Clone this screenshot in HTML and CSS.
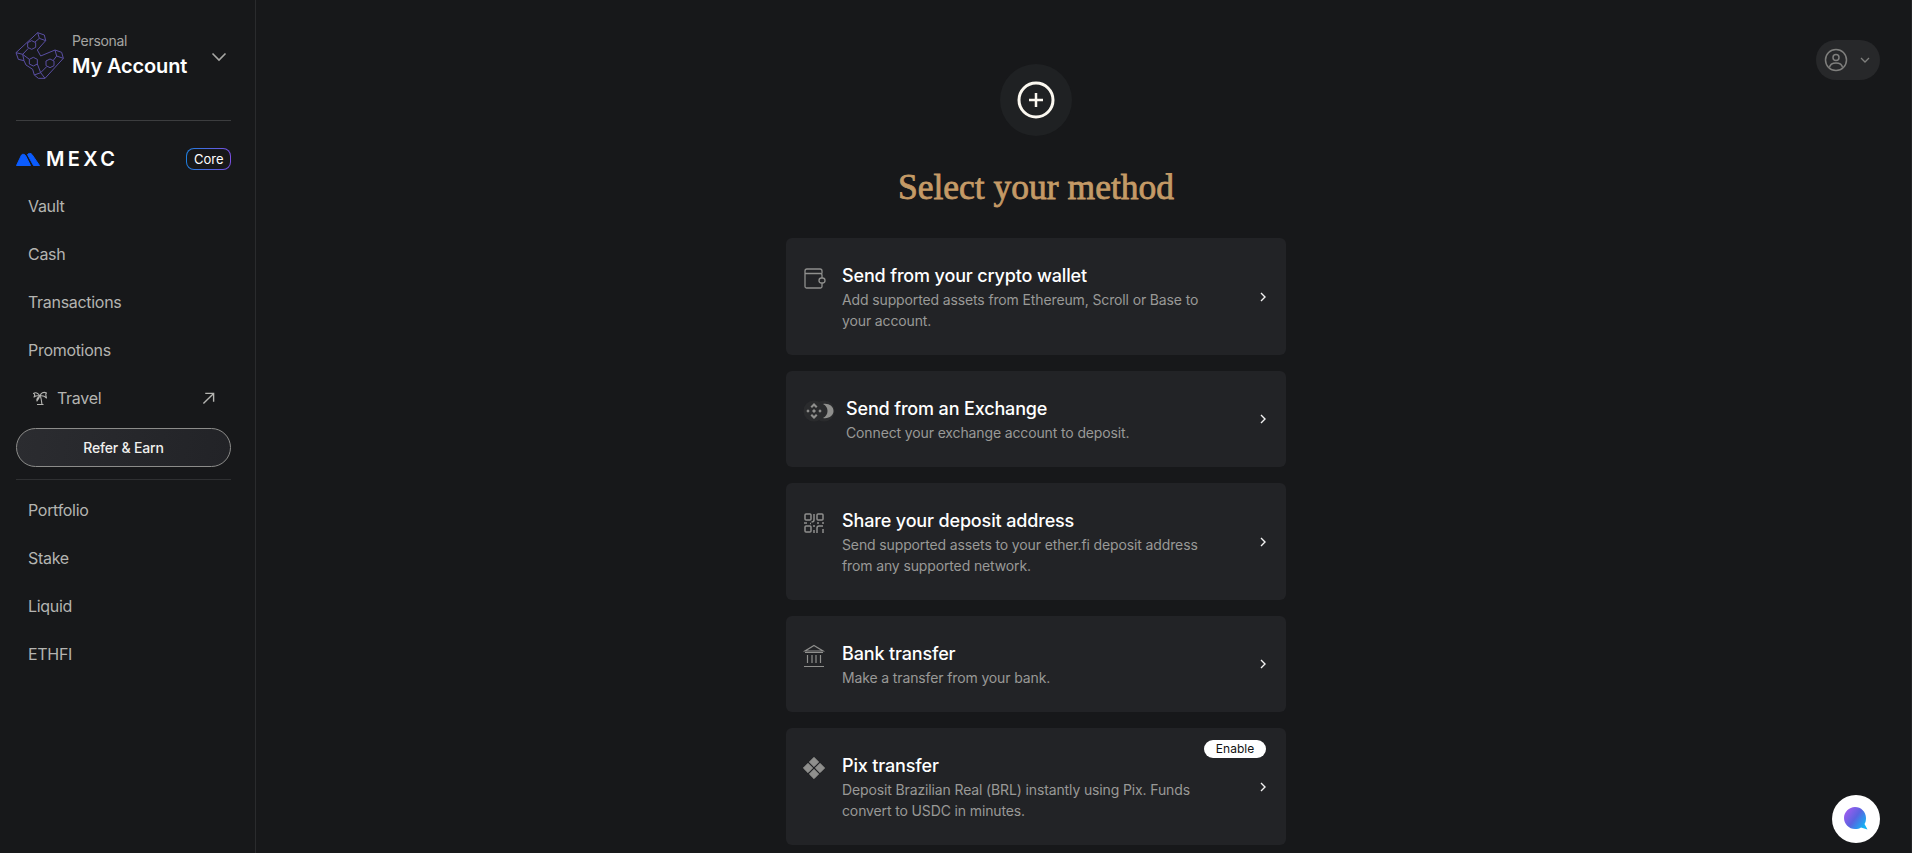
FILE: index.html
```html
<!DOCTYPE html>
<html lang="en">
<head>
    <meta charset="UTF-8">
    <meta name="viewport" content="width=device-width, initial-scale=1.0">
    <title>Select your method</title>
    <link rel="stylesheet" href="styles.css">
</head>
<body>
    <svg class="defs" width="0" height="0" aria-hidden="true">
        <defs>
            <linearGradient id="chatFill" x1="0" y1="0" x2="1" y2="0.7">
                <stop offset="0.1" stop-color="#a35cf0"/>
                <stop offset="0.55" stop-color="#5a63e0"/>
                <stop offset="1" stop-color="#12b5f5"/>
            </linearGradient>
        </defs>
    </svg>

    <aside class="sidebar">
        <div class="account">
            <svg class="account-logo" viewBox="45 33 150 150" fill="none" stroke="#5a4fa3" stroke-width="3" stroke-linejoin="round">
                <path d="M113 38L133 45L137 62L112 90L122 108L165 90L185 97L190 115L135 175L115 175L103 165L98 148L78 135L72 122L55 118L48 98Z"/>
                <path d="M95 62L107 68V82L95 88L83 82V68Z"/>
                <path d="M100 112L112 118V132L100 138L88 132V118Z"/>
                <path d="M150 117L162 123V137L150 143L138 137V123Z"/>
                <path d="M113 38L118 55L137 62M118 55L105 66M85 85L68 103L48 98M68 103L72 122M68 103L88 118"/>
                <path d="M165 90L170 108L190 115M170 108L160 121M140 140L122 158L103 165M122 158L135 175M112 132L122 158"/>
            </svg>
            <div class="account-text">
                <span class="account-label">Personal</span>
                <span class="account-name">My Account</span>
            </div>
            <svg class="account-chevron" viewBox="0 0 16 10" fill="none" stroke="#a8a8a5" stroke-width="1.6"><path d="M1.5 1.5L8 8L14.5 1.5"/></svg>
        </div>

        <div class="brand">
            <div class="brand-logo">
                <svg width="24" height="14" viewBox="0 0 24 14" fill="#0b5cff" stroke="#0b5cff" stroke-linejoin="round"><path d="M.5 13.500L5.500 3C6 2 8.500 2 9.500 3.500L14.500 13.500Z"/><path d="M11.500 2.500C12.500 1 15 1 16 2.500L23.500 13.500H17.500Z"/></svg>
                <span class="brand-name">MEXC</span>
            </div>
            <span class="core-badge">Core</span>
        </div>

        <nav class="nav">
            <a class="nav-item">Vault</a>
            <a class="nav-item">Cash</a>
            <a class="nav-item">Transactions</a>
            <a class="nav-item">Promotions</a>
            <a class="nav-item nav-travel">
                <svg width="16" height="16" viewBox="0 0 16 16" fill="none" stroke="#b4b4b1" stroke-width="1.1" stroke-linejoin="round"><path d="M8 6C6 3 3.500 2 1.500 3.500C3 4 3 5.500 2 7C4 5.500 6 5.500 8 6ZM8 6C9 3 11.500 1.500 14.500 3C13 3.500 14 6 14.500 8C12.500 6 10 5.500 8 6ZM7.500 6.500C5.500 7.500 4.500 9 5 11C6 9.500 7 8 7.500 6.500ZM8.500 6.500C9.500 9 9.500 12 10 14.500H7.500M5 14.500H11.500"/></svg>
                <span class="nav-travel-label">Travel</span>
                <svg width="13" height="13" viewBox="0 0 14 14" fill="none" stroke="#b4b4b1" stroke-width="1.5"><path d="M1.500 12.500L12.500 1.500M3.500 1.500H12.500V10.500"/></svg>
            </a>
        </nav>
        <button class="refer-btn">Refer &amp; Earn</button>
        <nav class="nav nav-lower">
            <a class="nav-item">Portfolio</a>
            <a class="nav-item">Stake</a>
            <a class="nav-item">Liquid</a>
            <a class="nav-item">ETHFI</a>
        </nav>
    </aside>

    <main class="main">
        <div class="plus-circle">
            <svg width="38" height="38" viewBox="0 0 38 38" fill="none" stroke="#fbf8f0" stroke-width="3"><circle cx="19" cy="19" r="17"/><path d="M19 12V26M12 19H26" stroke-width="2.500"/></svg>
        </div>
        <h1 class="title">Select your method</h1>

        <div class="methods">
            <div class="method">
                <svg class="method-icon" viewBox="0 0 24 24" fill="none" stroke="#8f8f8d" stroke-width="1.300"><path d="M3 7.500V5C3 3.900 3.900 3 5 3H18C19.100 3 20 3.900 20 5V7.500M3 6.500V20.500C3 21.300 3.700 22 4.500 22H18.500C19.300 22 20 21.300 20 20.500V17M3 7.500H18.500C19.300 7.500 20 8.200 20 9V12"/><rect x="17" y="12" width="6" height="5" rx="2.500"/></svg>
                <div class="method-text">
                    <div class="method-title">Send from your crypto wallet</div>
                    <div class="method-desc">Add supported assets from Ethereum, Scroll or Base to your account.</div>
                </div>
                <svg class="method-chevron" viewBox="0 0 6 10" fill="none" stroke="#f2f2f2" stroke-width="1.400"><path d="M1 1L5 5L1 9"/></svg>
            </div>

            <div class="method method-wide">
                <svg class="method-icon" viewBox="0 0 34 24" fill="none">
                    <circle cx="22" cy="12" r="10.500" fill="#2a2b2d"/>
                    <circle cx="12" cy="12" r="10.500" fill="#2a2b2d"/>
                    <path fill="#8f8f8d" d="M12 4L15.500 7.500L14 9L12 7L10 9L8.500 7.500ZM6 10.300L7.700 12L6 13.700L4.300 12ZM18 10.300L19.700 12L18 13.700L16.300 12ZM12 10L14 12L12 14L10 12ZM8.500 16.500L10 15L12 17L14 15L15.500 16.500L12 20Z"/>
                    <path fill="#8f8f8d" d="M21 5C27 4 31.500 7.500 31.500 12C31.500 16.500 27 20 21 19C24 17.500 25.500 15 25.500 12C25.500 9 24 6.500 21 5Z"/>
                </svg>
                <div class="method-text">
                    <div class="method-title">Send from an Exchange</div>
                    <div class="method-desc">Connect your exchange account to deposit.</div>
                </div>
                <svg class="method-chevron" viewBox="0 0 6 10" fill="none" stroke="#f2f2f2" stroke-width="1.400"><path d="M1 1L5 5L1 9"/></svg>
            </div>

            <div class="method">
                <svg class="method-icon" viewBox="0 0 24 24" fill="none" stroke="#8f8f8d" stroke-width="1.500"><rect x="3" y="3" width="6" height="6" rx="1"/><rect x="15" y="3" width="6" height="6" rx="1"/><rect x="3" y="15" width="6" height="6" rx="1"/><path d="M12 3V9C12 10.500 11 11 9.500 11M2 12H5M8 12.500H9M15 12H17M20 12H22M12 14V16M12 19V22M15 22V17C15 15.500 16 15 17 15H21M21 18V22"/></svg>
                <div class="method-text">
                    <div class="method-title">Share your deposit address</div>
                    <div class="method-desc">Send supported assets to your ether.fi deposit address from any supported network.</div>
                </div>
                <svg class="method-chevron" viewBox="0 0 6 10" fill="none" stroke="#f2f2f2" stroke-width="1.400"><path d="M1 1L5 5L1 9"/></svg>
            </div>

            <div class="method">
                <svg class="method-icon" viewBox="0 0 24 24" fill="none" stroke="#8f8f8d" stroke-width="1.200"><path d="M12 1.500L21 7H3ZM3 8.500H21M5.500 11V19M10 11V19M14 11V19M18.500 11V19M2 22.500H22" /></svg>
                <div class="method-text">
                    <div class="method-title">Bank transfer</div>
                    <div class="method-desc">Make a transfer from your bank.</div>
                </div>
                <svg class="method-chevron" viewBox="0 0 6 10" fill="none" stroke="#f2f2f2" stroke-width="1.400"><path d="M1 1L5 5L1 9"/></svg>
            </div>

            <div class="method">
                <svg class="method-icon" viewBox="0 0 24 24" fill="#8f8f8d" stroke="#8f8f8d" stroke-width="0.800" stroke-linejoin="round"><path d="M12 1.300L16.700 6L12 10.700L7.300 6ZM18 7.300L22.700 12L18 16.700L13.300 12ZM6 7.300L10.700 12L6 16.700L1.300 12ZM12 13.300L16.700 18L12 22.700L7.300 18Z"/></svg>
                <div class="method-text">
                    <div class="method-title">Pix transfer</div>
                    <div class="method-desc">Deposit Brazilian Real (BRL) instantly using Pix. Funds convert to USDC in minutes.</div>
                </div>
                <svg class="method-chevron" viewBox="0 0 6 10" fill="none" stroke="#f2f2f2" stroke-width="1.400"><path d="M1 1L5 5L1 9"/></svg>
                <span class="enable-badge">Enable</span>
            </div>
        </div>
    </main>

    <div class="topbar">
        <button class="profile-btn">
            <svg width="24" height="24" viewBox="0 0 24 24" fill="none" stroke="#7f7f7d" stroke-width="1.500"><circle cx="12" cy="12" r="10.500"/><circle cx="12" cy="9.500" r="3"/><path d="M5.500 19.500C6 16 9 15 12 15C15 15 18 16 18.500 19.500"/></svg>
            <svg width="10" height="6" viewBox="0 0 10 6" fill="none" stroke="#7f7f7d" stroke-width="1.300"><path d="M1 1L5 5L9 1"/></svg>
        </button>
    </div>

    <button class="chat-btn" aria-label="Chat">
        <svg width="26" height="26" viewBox="0 0 26 26"><path fill="url(#chatFill)" d="M12 1C18 1 23 5.800 23 12C23 14.500 22.500 16.500 21.500 18L24.500 23.500L18 21.500C16.500 22.500 14.500 23 12 23C6 23 1 18 1 12C1 6 6 1 12 1Z"/></svg>
    </button>
</body>
</html>
```

FILE: styles.css
```css
* {
    box-sizing: border-box;
}
html, body {
    height: 100%;
}
body {
    font-family: Inter, "Noto Sans", sans-serif;
    background-color: #17181a;
    color: #fff;
    margin: 0;
    display: flex;
    overflow: hidden;
    border-right: 1px solid #232426;
}
.defs {
    position: absolute;
}

/* sidebar */
.sidebar {
    width: 256px;
    flex-shrink: 0;
    padding: 0 24px 0 16px;
    border-right: 1px solid #2a2b2d;
}
.account {
    display: flex;
    align-items: center;
    height: 121px;
    padding-top: 32px;
    padding-bottom: 40px;
    border-bottom: 1px solid #3c3d3f;
}
.account-logo {
    width: 50px;
    height: 50px;
    margin-left: -1px;
    margin-right: 7px;
    flex-shrink: 0;
}
.account-text {
    display: flex;
    flex-direction: column;
    flex: 1;
}
.account-label {
    font-size: 14px;
    line-height: 18px;
    margin-bottom: 2px;
    color: #a5a5a2;
    letter-spacing: -0.3px;
}
.account-name {
    font-size: 20px;
    line-height: 28px;
    font-weight: 600;
    letter-spacing: -0.15px;
}
.account-chevron {
    width: 16px;
    height: 10px;
    margin-right: 4px;
    margin-top: 2px;
}
.brand {
    display: flex;
    align-items: center;
    justify-content: space-between;
    height: 22px;
    margin-top: 27px;
    margin-bottom: 12px;
}
.brand-logo {
    display: flex;
    align-items: center;
    gap: 6px;
}
.brand-name {
    font-size: 20px;
    font-weight: 600;
    letter-spacing: 3.4px;
    line-height: 22px;
}
.core-badge {
    font-size: 13px;
    line-height: 20px;
    padding: 0 6.5px;
    border: 1px solid transparent;
    border-radius: 8px;
    background: linear-gradient(#17181a, #17181a) padding-box, linear-gradient(90deg, #1f7fe0, #7a4fe0) border-box;
}
.nav-item {
    display: flex;
    align-items: center;
    height: 48px;
    padding-left: 12px;
    font-size: 16px;
    color: #b4b4b1;
    letter-spacing: -0.3px;
}
.nav-travel {
    padding-left: 16px;
    padding-right: 16px;
}
.nav-travel-label {
    flex: 1;
    margin-left: 9px;
}
.refer-btn {
    display: block;
    width: 100%;
    height: 39px;
    margin-top: 6px;
    font-family: inherit;
    font-size: 14px;
    font-weight: 500;
    letter-spacing: -0.2px;
    color: #f0f0ee;
    background: linear-gradient(100deg, #2b2c30, #222327);
    border: 1px solid #8c8c8a;
    border-radius: 20px;
}
.nav-lower {
    margin-top: 12px;
    padding-top: 6px;
    border-top: 1px solid #2f3032;
}

/* main column */
.main {
    flex: 1;
    display: flex;
    flex-direction: column;
    align-items: center;
    padding-top: 64px;
}
.plus-circle {
    display: flex;
    align-items: center;
    justify-content: center;
    width: 72px;
    height: 72px;
    border-radius: 50%;
    background-color: #1f2123;
}
.title {
    margin: 33px 0 32px;
    font-family: "Liberation Serif", serif;
    font-size: 35.5px;
    line-height: 37px;
    font-weight: 400;
    -webkit-text-stroke: 0.8px #c49a66;
    color: #c49a66;
}
.methods {
    display: flex;
    flex-direction: column;
    gap: 16px;
    width: 500px;
}
.method {
    position: relative;
    display: flex;
    align-items: flex-start;
    gap: 16px;
    padding: 24px 20px 24px 16px;
    background-color: #222326;
    border-radius: 6px;
}
.method-icon {
    width: 24px;
    height: 24px;
    margin-top: 4px;
    flex-shrink: 0;
}
.method-wide {
    gap: 10px;
}
.method-wide .method-icon {
    width: 34px;
}
.method-text {
    flex: 1;
    padding-right: 32px;
}
.method-title {
    font-size: 18px;
    line-height: 27px;
    font-weight: 500;
    letter-spacing: -0.15px;
}
.method-desc {
    font-size: 14px;
    line-height: 21px;
    color: #999997;
    letter-spacing: -0.13px;
}
.method-chevron {
    width: 6px;
    height: 10px;
    align-self: center;
    flex-shrink: 0;
}
.enable-badge {
    position: absolute;
    top: 12px;
    right: 20px;
    width: 62px;
    height: 18px;
    font-size: 12px;
    line-height: 18px;
    text-align: center;
    color: #111;
    background-color: #fff;
    border-radius: 9px;
}

/* top right and floating */
.topbar {
    width: 95px;
    flex-shrink: 0;
    padding-top: 40px;
}
.profile-btn {
    display: flex;
    align-items: center;
    gap: 12px;
    width: 64px;
    height: 40px;
    padding: 0 0 0 8px;
    border: none;
    border-radius: 20px;
    background-color: #27282a;
}
.chat-btn {
    position: fixed;
    right: 32px;
    bottom: 10px;
    display: flex;
    align-items: center;
    justify-content: center;
    width: 48px;
    height: 48px;
    padding: 0;
    border: none;
    border-radius: 50%;
    background-color: #fff;
}
```
